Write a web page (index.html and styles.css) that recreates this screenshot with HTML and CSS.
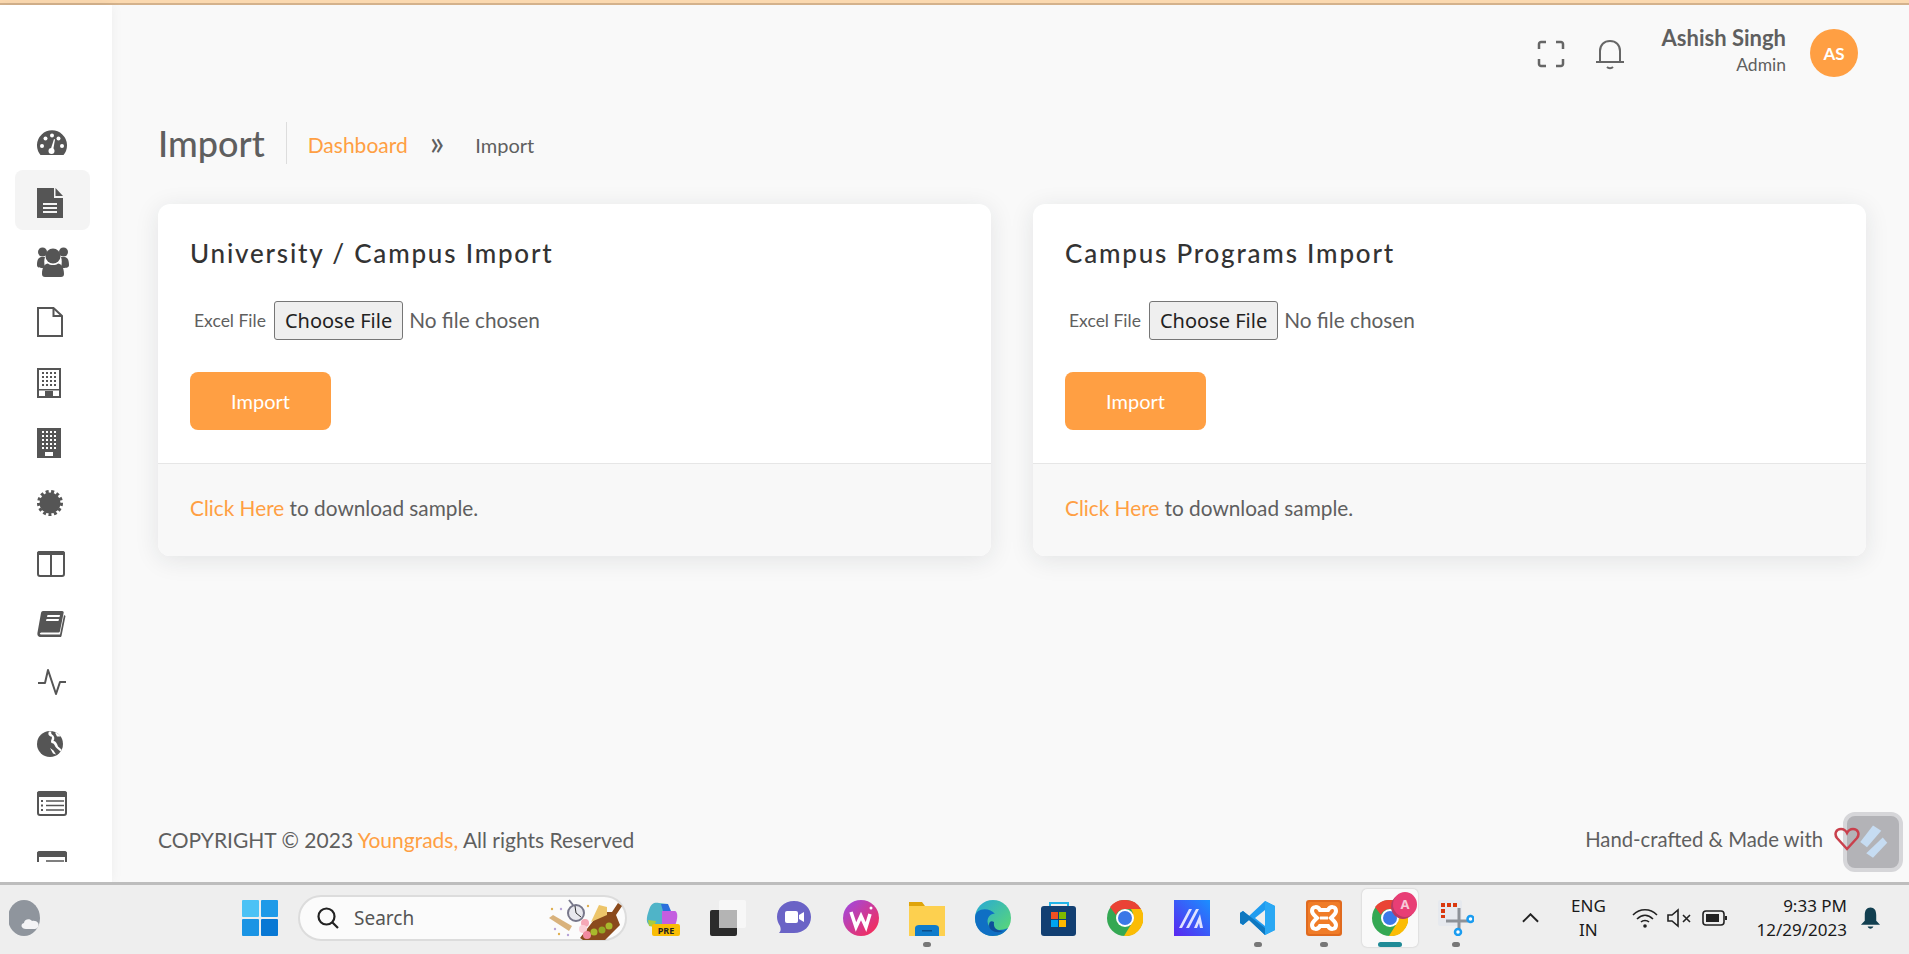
FILE: index.html
```html
<!DOCTYPE html>
<html lang="en">
<head>
    <meta charset="UTF-8">
    <meta name="viewport" content="width=device-width, initial-scale=1.0">
    <title>Import</title>
    <link rel="stylesheet" href="styles.css">
</head>
<body>
    <div class="top-strip"></div>

    <div class="app">
        <aside class="sidebar">
            <nav class="side-nav">
                <a class="side-item" href="#"><svg viewBox="0 0 32 32"><path class="fill" d="M3.500 29A15 15 0 1 1 26.500 29Z"/><g class="cut"><circle cx="5" cy="20" r="2"/><circle cx="8.500" cy="12.500" r="2"/><circle cx="15" cy="9.500" r="2"/><circle cx="25" cy="20" r="2"/><circle cx="21.500" cy="12.500" r="2"/><circle cx="14.500" cy="25" r="3"/><path d="M13.500 24 17 13 18 13.500 16 25Z"/></g></svg></a>
                <a class="side-item active" href="#"><svg viewBox="0 -1 32 32"><path class="fill" d="M0 1H17V11H26V31H0Z"/><path class="fill" d="M18.500 1 26 9H18.500Z"/><path class="cut" d="M6 16H20V18H6ZM6 20H20V22H6ZM6 24H20V26H6Z"/></svg></a>
                <a class="side-item" href="#"><svg viewBox="0 0 32 32"><circle class="fill" cx="5.500" cy="6" r="4.500"/><circle class="fill" cx="26.500" cy="6" r="4.500"/><path class="fill" d="M0 19C0 13 2 11 5 11H8C7 14 7 17 8 22 3 22 0 22 0 19ZM32 19C32 13 30 11 27 11H24C25 14 25 17 24 22 29 22 32 22 32 19Z"/><circle cx="16" cy="10" r="7.500" class="fill"/><path class="fill" d="M5 28C5 21 8 17.500 11 17.500 13 19.500 19 19.500 21 17.500 24 17.500 27 21 27 28 27 30 26 31 24 31H8C6 31 5 30 5 28Z"/></svg></a>
                <a class="side-item" href="#"><svg viewBox="0 0 32 32"><path class="line" d="M1 2H16.500L25 10V30H1Z"/><path class="line" d="M16.500 2V10H25"/></svg></a>
                <a class="side-item" href="#"><svg viewBox="0 -1 32 32"><path class="line" d="M1 2H23V30H1Z"/><path class="dots" d="M5 6H20M5 10H20M5 14H20M5 18H20"/><path class="fill" d="M8 24H16V30H8ZM1 22H23V23.500H1Z"/></svg></a>
                <a class="side-item" href="#"><svg viewBox="0 -1 32 32"><path class="fill" d="M0 1H24V31H0Z"/><path class="dots white" d="M5 5H20M5 9H20M5 13H20M5 17H20M5 21H20"/><path class="cut" d="M8 25H16V29H8Z"/></svg></a>
                <a class="side-item" href="#"><svg viewBox="0 -2 32 32"><circle class="fill" cx="13" cy="15" r="10.500"/><circle class="burst" cx="13" cy="15" r="11.500"/></svg></a>
                <a class="side-item" href="#"><svg viewBox="0 -2 32 32"><rect class="line" x="1" y="4" width="26" height="24" rx="2"/><path class="fill" d="M0 5C0 4 1 3 2 3H26C27 3 28 4 28 5V7H0Z"/><path class="fill" d="M13 6H15V28H13Z"/></svg></a>
                <a class="side-item" href="#"><svg viewBox="0 -2 32 32"><path class="fill" d="M6 3H25C26.500 3 27 4 26.500 5.500L23 23C22.800 24 22 24.500 21 24.500H5C3 24.500 2 26 4 26.500H23L27 7 28.500 8 24.500 28C24.300 29 23.500 29 23 29H4C1 29 0 27 .5 24.500L4 5C4.300 3.700 5 3 6 3Z"/><path class="cut" d="M10.500 7H23L22.500 9H10ZM9.500 11H22L21.500 13H9Z"/></svg></a>
                <a class="side-item" href="#"><svg viewBox="0 -2 32 32"><path class="pulse" d="M1 15H8L11 2 19 26 23 14H29"/></svg></a>
                <a class="side-item" href="#"><svg viewBox="0 -2 32 32"><circle class="fill" cx="13" cy="16" r="13"/><path class="cut" d="M12 3.500C10.500 6 12 8.500 14.500 8.500 16 10.500 13 12.500 14.500 15 17.500 15 17.500 18 19.500 20L23.500 23.500 24.500 21.500 21 18.500C20 15 18.500 13 16.500 13 18 11 17.500 8 15 6.500 14 5.500 14 4.500 14.500 3.500ZM18 4.500 20 8.500H23.500C22.500 6.500 20.500 5 18 4.500ZM13 20 16 25.500 19 26.500 16.500 22.500Z"/></svg></a>
                <a class="side-item" href="#"><svg viewBox="0 -2 32 32"><rect class="line" x="1" y="4" width="28" height="23" rx="2"/><path class="fill" d="M0 5C0 4 1 3 3 3H27C29 3 30 4 30 5V9H0Z"/><path class="list-lines" d="M9 13H27M9 17.500H27M9 22H27"/><path class="dots tight" d="M4 13H7M4 17.500H7M4 22H7"/></svg></a>
                <a class="side-item" href="#"><svg viewBox="0 -2 32 32"><rect class="line" x="1" y="4" width="28" height="23" rx="2"/><path class="fill" d="M0 5C0 4 1 3 3 3H27C29 3 30 4 30 5V9H0Z"/><path class="list-lines" d="M9 13H27M9 17.500H27M9 22H27"/></svg></a>
            </nav>
        </aside>

        <main class="main">
            <header class="topbar">
                <svg class="top-icon" viewBox="0 0 28 28"><path d="M2 9V4C2 3 3 2 4 2H9M19 2H24C25 2 26 3 26 4V9M26 19V24C26 25 25 26 24 26H19M9 26H4C3 26 2 25 2 24V19"/></svg>
                <svg class="top-icon bell" viewBox="0 0 32 32"><path d="M6 23V13C6 7 10 3 16 3S26 7 26 13V23M2 24H30M13 29C14.500 30.500 17.500 30.500 19 29"/></svg>
                <div class="user">
                    <div class="user-name">Ashish Singh</div>
                    <div class="user-role">Admin</div>
                </div>
                <div class="avatar">AS</div>
            </header>

            <div class="page-title">
                <h1>Import</h1>
                <a class="crumb-link" href="#">Dashboard</a>
                <span class="crumb-sep">»</span>
                <span class="crumb">Import</span>
            </div>

            <div class="cards">
                <section class="card">
                    <div class="card-body">
                        <h2>University / Campus Import</h2>
                        <div class="file-row">
                            <label>Excel File</label>
                            <input type="file">
                        </div>
                        <button class="import-btn" type="button">Import</button>
                    </div>
                    <div class="card-foot"><a href="#">Click Here</a> to download sample.</div>
                </section>
                <section class="card">
                    <div class="card-body">
                        <h2>Campus Programs Import</h2>
                        <div class="file-row">
                            <label>Excel File</label>
                            <input type="file">
                        </div>
                        <button class="import-btn" type="button">Import</button>
                    </div>
                    <div class="card-foot"><a href="#">Click Here</a> to download sample.</div>
                </section>
            </div>

            <footer class="page-foot">
                <div>COPYRIGHT © 2023 <a href="#">Youngrads,</a> All rights Reserved</div>
                <div class="made">Hand-crafted &amp; Made with
                    <svg class="heart" viewBox="0 0 26 26"><path d="M13 23 3 12C0 8 2 3 7 3 10 3 12 5 13 7 14 5 16 3 19 3 24 3 26 8 23 12Z"/></svg>
                </div>
            </footer>
        </main>
    </div>

    <div class="float-btn">
        <svg viewBox="0 0 48 52"><path d="M24 4 35 11 16 33 7 26Z"/><path d="M37 20 43 27 24 47 15 41Z"/></svg>
    </div>

    <div class="taskbar">
        <svg class="weather" viewBox="0 0 36 36"><ellipse cx="15" cy="18" rx="16" ry="18" fill="#8f959d"/><path d="M17 29C12 29 11 24 15 23 15 19 21 18 23 21 28 20 31 24 29 27 28 29 26 29 25 29Z" fill="#f4f4f6"/></svg>

        <svg class="win-logo" viewBox="0 0 36 36"><rect width="17" height="17" rx="1" fill="#4cc2f5"/><rect x="19" width="17" height="17" rx="1" fill="#1e9ae8"/><rect y="19" width="17" height="17" rx="1" fill="#1a94e4"/><rect x="19" y="19" width="17" height="17" rx="1" fill="#0878d4"/></svg>

        <div class="search">
            <svg class="search-icon" viewBox="0 0 24 24"><circle cx="10.500" cy="10.500" r="8"/><path d="M16 16 22 22"/></svg>
            <span>Search</span>
            <svg class="search-art" viewBox="0 0 76 44"><path d="M2 22 6 19 25 30 22 35Z" fill="#d9b27c"/><g fill="#b7a4d8"><circle cx="8" cy="33" r="1.200"/><circle cx="14" cy="13" r="1.200"/><circle cx="21" cy="39" r="1.200"/></g><g fill="#e0b050"><circle cx="5" cy="13" r="1.200"/><circle cx="12" cy="38" r="1.200"/><circle cx="41" cy="10" r="1.200"/></g><path d="M22 4 26 9" stroke="#77778a" stroke-width="2"/><circle cx="29" cy="17" r="8" fill="#e8e8ee" stroke="#77778a" stroke-width="2"/><path d="M28 10 29 17 34 21" stroke="#333" fill="none"/><path d="M33 42 53 16H65L71 7 75 10 69 19 73 29 58 44H36Z" fill="#8a4a1c"/><path d="M44 26 52 9 60 11 60 19Z" fill="#edc56a"/><circle cx="38" cy="27" r="4" fill="#f6a8b6"/><circle cx="36" cy="33" r="4" fill="#fbd0d8"/><circle cx="40" cy="39" r="4" fill="#f28aa0"/><circle cx="47" cy="36" r="3.500" fill="#a9b82c"/><circle cx="55" cy="34" r="3.500" fill="#94a824"/><circle cx="62" cy="30" r="3.500" fill="#a9b82c"/></svg>
        </div>

        <div class="apps">
            <div class="app-slot"><svg viewBox="0 0 36 36"><path d="M5 10C7 3 11 2 15 3L24 4 20 26 6 25C2 24 2 18 5 10Z" fill="#4fb4c8"/><path d="M4 20 12 21 10 27 5 26Z" fill="#a9cc3e"/><path d="M18 11H31C34 12 34 18 31 26L18 27Z" fill="#c45ee0"/><path d="M17 4 24 4 27 11H19Z" fill="#2a6fdc"/><rect x="8" y="24" width="28" height="12" rx="2" fill="#f9bd05"/><text class="pre" x="22" y="33.500">PRE</text></svg></div>
            <div class="app-slot"><svg viewBox="0 0 36 36"><rect x="9" y="0" width="27" height="28" rx="2" fill="#f7f7f7"/><rect y="10" width="27" height="26" rx="2" fill="#2b2b2b"/><rect x="9" y="10" width="18" height="18" fill="#b4b4b4"/></svg></div>
            <div class="app-slot"><svg viewBox="0 0 36 36"><path d="M18 1C28 1 35 8 35 17S28 33 18 33H3C5 31 5 29 4 26 2 23 1 20 1 17 1 8 8 1 18 1Z" fill="#6a63c6"/><rect x="9" y="11" width="13" height="12" rx="2" fill="#fff"/><path d="M23 15 28 12V22L23 19Z" fill="#fff"/></svg></div>
            <div class="app-slot"><svg viewBox="0 0 36 36"><defs><linearGradient id="wps" x1="0" y1="0" x2="1" y2="1"><stop offset="0" stop-color="#9a4be8"/><stop offset="1" stop-color="#ff2a4a"/></linearGradient></defs><circle cx="18" cy="18" r="18" fill="url(#wps)"/><path d="M8 12 13 27 18 16 23 27 27 14" fill="none" stroke="#fff" stroke-width="3.500"/><circle cx="28" cy="8" r="1.500" fill="#fff"/></svg></div>
            <div class="app-slot dot"><svg viewBox="0 0 36 36"><path d="M0 2H13L16 6H36V36H0Z" fill="#dfa40a"/><rect y="6" width="36" height="30" fill="#fdd04f"/><path d="M6 36V28C6 26 8 25 10 25H26C28 25 30 26 30 28V36Z" fill="#0f7ccb"/><rect x="13" y="30" width="10" height="1.500" fill="#0a4f8c"/></svg></div>
            <div class="app-slot"><svg viewBox="0 0 36 36"><defs><linearGradient id="edge" x1="0" y1="0" x2="1" y2="1"><stop offset="0" stop-color="#27a8d8"/><stop offset="1" stop-color="#5fdc6e"/></linearGradient></defs><circle cx="18" cy="18" r="18" fill="url(#edge)"/><path d="M0 18C0 29 8 36 18 36 24 36 30 33 33 28 27 31 16 31 13 24 11 18 16 13 20 14 15 7 0 7 0 18Z" fill="#0f6fc4"/><path d="M14 25C14 31 22 34 28 31 22 31 18 28 19 22 16 20 14 22 14 25Z" fill="#0d4f9a"/></svg></div>
            <div class="app-slot"><svg viewBox="0 0 36 36"><path d="M9 7V3H27V7" fill="none" stroke="#22b4e8" stroke-width="2"/><rect y="6" width="35" height="30" rx="3" fill="#123f72"/><rect x="10" y="12" width="7" height="7" fill="#f25022"/><rect x="18" y="12" width="7" height="7" fill="#7fba00"/><rect x="10" y="20" width="7" height="7" fill="#00a4ef"/><rect x="18" y="20" width="7" height="7" fill="#ffb900"/></svg></div>
            <div class="app-slot"><svg viewBox="0 0 36 36"><circle cx="18" cy="18" r="18" fill="#34a853"/><path d="M18 0A18 18 0 0 1 34 9H18C13 9 10 12 9 15L3 7A18 18 0 0 1 18 0Z" fill="#ea4335"/><path d="M34 9A18 18 0 0 1 17 36L25 23C27 20 27 14 24 9Z" fill="#fbbc05"/><circle cx="18" cy="18" r="9" fill="#fff"/><circle cx="18" cy="18" r="7" fill="#3b78e7"/></svg></div>
            <div class="app-slot"><svg viewBox="0 0 36 36"><defs><linearGradient id="ma" x1="0" y1="1" x2="1" y2="0"><stop offset="0" stop-color="#5a26f0"/><stop offset="1" stop-color="#1a90ff"/></linearGradient></defs><rect width="36" height="36" fill="url(#ma)"/><path d="M5 28 15 9H18L8 28ZM12 28 22 9H25L15 28ZM20 28 26 14 29 28H26L25 23 23 28Z" fill="#dfe2ff"/></svg></div>
            <div class="app-slot dot"><svg viewBox="0 0 36 36"><path d="M25 1 35 6V30L25 35 9 20 3 25 0 23V13L3 11 9 16ZM25 10 15 18 25 26Z" fill="#1f9cf0"/><path d="M25 1 35 6V30L25 35Z" fill="#2aa8f4"/><path d="M0 13 3 11 25 28V35L9 20 3 25 0 23Z" fill="#0f78c0"/></svg></div>
            <div class="app-slot dot"><svg viewBox="0 0 36 36"><rect width="36" height="36" rx="3" fill="#e06a1e"/><rect x="2" y="2" width="32" height="32" rx="2" fill="#f07c28"/><path d="M14 10C12 6 6 6 6 11 6 14 9 16 11 18 9 20 6 22 6 25 6 30 12 30 14 26H22C24 30 30 30 30 25 30 22 27 20 25 18 27 16 30 14 30 11 30 6 24 6 22 10Z" fill="none" stroke="#fff" stroke-width="4"/><path d="M14 18H22" stroke="#fff" stroke-width="3"/></svg></div>
            <div class="app-slot chrome-active"><svg viewBox="0 0 36 36"><circle cx="18" cy="18" r="18" fill="#34a853"/><path d="M18 0A18 18 0 0 1 34 9H18C13 9 10 12 9 15L3 7A18 18 0 0 1 18 0Z" fill="#ea4335"/><path d="M34 9A18 18 0 0 1 17 36L25 23C27 20 27 14 24 9Z" fill="#fbbc05"/><circle cx="18" cy="18" r="9" fill="#fff"/><circle cx="18" cy="18" r="7" fill="#3b78e7"/></svg><span class="profile">A</span></div>
            <div class="app-slot dot"><svg viewBox="0 0 36 36"><rect width="24" height="26" rx="2" fill="#e6e9ee"/><path d="M3 3H7V7H3ZM9 3H13V7H9ZM15 3H19V7H15ZM3 9H7V13H3ZM3 15H7V18H3Z" fill="#d9380f"/><path d="M21 8V29M8 21H30" stroke="#8d9298" stroke-width="3"/><circle cx="20" cy="32" r="3" fill="#fff" stroke="#1a9cf0" stroke-width="2.500"/><circle cx="32.500" cy="19" r="3" fill="#fff" stroke="#1a9cf0" stroke-width="2.500"/></svg></div>
        </div>

        <div class="tray">
            <svg class="chevron" viewBox="0 0 18 10"><path d="M1 9 9 1 17 9"/></svg>
            <div class="lang">ENG<br>IN</div>
            <svg class="tray-icon wifi" viewBox="0 0 26 20"><path d="M1 7C8 0 18 0 25 7M5 11C10 6 16 6 21 11M9 14C11 12 15 12 17 14"/><circle cx="13" cy="18" r="1.800"/></svg>
            <svg class="tray-icon" viewBox="0 0 26 20"><path d="M1 7H5L11 2V18L5 13H1Z"/><path d="M16 7 23 14M23 7 16 14"/></svg>
            <svg class="tray-icon" viewBox="0 0 26 20"><rect x="1" y="3" width="21" height="14" rx="3"/><rect class="solid" x="4" y="6" width="13" height="8"/><rect class="solid" x="23" y="8" width="2" height="4"/></svg>
            <div class="clock">9:33 PM<br>12/29/2023</div>
            <svg class="tray-bell" viewBox="0 0 22 24"><path d="M11 1C15 1 17 4 17 9V15L21 19H1L5 15V9C5 4 7 1 11 1ZM8 21H14C13 24 9 24 8 21Z"/></svg>
        </div>
    </div>
</body>
</html>
```

FILE: styles.css
```css
* {
    box-sizing: border-box;
}
html, body {
    height: 100%;
}
body {
    margin: 0;
    display: flex;
    flex-direction: column;
    height: 954px;
    overflow: hidden;
    background: #f9f9f9;
    color: #5f5f5f;
    font-family: Lato, "Noto Sans", sans-serif;
}
a {
    color: #ff9f43;
    text-decoration: none;
}
.top-strip {
    height: 5px;
    background: #fbd9b0;
    border-bottom: 2px solid #d4b28c;
}
.app {
    flex: 1;
    display: flex;
    min-height: 0;
}

/* sidebar */
.sidebar {
    width: 112px;
    padding-top: 105px;
    background: #fff;
    box-shadow: 0 0 12px rgba(0, 0, 0, .05);
}
.side-nav {
    height: 752px;
    overflow: hidden;
}
.side-item {
    display: flex;
    align-items: center;
    width: 75px;
    height: 60px;
    margin-left: 15px;
    padding: 4px 0 0 22px;
    border-radius: 8px;
}
.side-item.active {
    background: #f4f4f4;
}
.side-item svg {
    width: 32px;
    height: 32px;
    flex: none;
}
.fill {
    fill: #555;
}
.cut {
    fill: #fff;
}
.active .cut {
    fill: #f4f4f4;
}
.line {
    fill: none;
    stroke: #555;
    stroke-width: 2;
}
.dots {
    fill: none;
    stroke: #555;
    stroke-width: 2;
    stroke-dasharray: 2 2;
}
.dots.white {
    stroke: #fff;
}
.dots.tight {
    stroke-dasharray: 2 1;
}
.burst {
    fill: none;
    stroke: #555;
    stroke-width: 3;
    stroke-dasharray: 3 2.500;
}
.pulse {
    fill: none;
    stroke: #555;
    stroke-width: 2;
    stroke-linejoin: round;
}
.list-lines {
    fill: none;
    stroke: #555;
    stroke-width: 1.500;
}

/* main */
.main {
    flex: 1;
    display: flex;
    flex-direction: column;
    padding: 0 43px 0 46px;
    min-width: 0;
}
.topbar {
    display: flex;
    align-items: center;
    justify-content: flex-end;
    height: 96px;
    padding: 0 8px 0 0;
}
.top-icon {
    width: 28px;
    height: 28px;
    margin-top: 2px;
    fill: none;
    stroke: #666;
    stroke-width: 2.500;
}
.top-icon.bell {
    width: 32px;
    height: 32px;
    stroke-width: 2;
    margin: 2px 0 0 29px;
}
.user {
    margin: -7px 24px 0 36px;
    text-align: right;
}
.user-name {
    font-size: 22px;
    font-weight: 700;
    line-height: 26px;
}
.user-role {
    font-size: 17.500px;
    line-height: 20px;
    margin-top: 4px;
}
.avatar {
    width: 48px;
    height: 48px;
    border-radius: 50%;
    background: #ff9f43;
    color: #fff;
    font-size: 17px;
    font-weight: 700;
    display: flex;
    align-items: center;
    justify-content: center;
}
.page-title {
    display: flex;
    align-items: center;
    height: 42px;
    margin-top: 21px;
    font-size: 20px;
}
.page-title h1 {
    margin: 0 21px 0 0;
    padding-right: 21px;
    border-right: 1px solid #ddd;
    font-size: 36px;
    font-weight: 500;
    line-height: 42px;
}
.crumb-link {
    padding-top: 3px;
    font-size: 21px;
}
.crumb {
    padding-top: 4px;
}
.crumb-sep {
    margin: -3px 31px 0 22px;
    font-size: 34px;
    font-weight: 400;
}

/* cards */
.cards {
    display: grid;
    grid-template-columns: 1fr 1fr;
    gap: 42px;
    margin-top: 40px;
}
.card {
    background: #fff;
    border-radius: 12px;
    box-shadow: 0 4px 24px rgba(34, 41, 47, .1);
    overflow: hidden;
}
.card-body {
    height: 259px;
    padding: 30px 32px 0;
}
.card h2 {
    margin: 0;
    color: #333;
    font-size: 26px;
    font-weight: 500;
    line-height: 38px;
    letter-spacing: 1.800px;
}
.file-row {
    display: flex;
    align-items: center;
    margin-top: 29px;
    padding-left: 4px;
    font-size: 17.500px;
}
.file-row label {
    margin-right: 8px;
}
.file-row input {
    color: #5f5f5f;
    font-family: Lato, sans-serif;
    font-size: 20.800px;
}
.file-row input::file-selector-button {
    height: 39px;
    margin-right: 6px;
    padding: 0 10px;
    background: #efefef;
    border: 1px solid #767676;
    border-radius: 3px;
    color: #222;
    font-family: "Noto Sans", sans-serif;
    font-size: 20px;
}
.import-btn {
    display: block;
    width: 141px;
    height: 58px;
    margin-top: 32px;
    background: #ff9f43;
    border: none;
    border-radius: 8px;
    color: #fff;
    font-family: Lato, sans-serif;
    font-size: 20px;
}
.card-foot {
    height: 93px;
    padding: 31px 32px 0;
    background: #f8f8f8;
    border-top: 1px solid #e6e6e6;
    font-size: 20.800px;
    line-height: 26px;
}
.page-foot {
    display: flex;
    justify-content: space-between;
    align-items: center;
    margin-top: auto;
    height: 70px;
    margin-bottom: 8px;
    font-size: 21px;
}
.made {
    display: flex;
    align-items: center;
    gap: 11px;
    padding-right: 6px;
    font-size: 20.300px;
}
.heart {
    position: relative;
    z-index: 1;
    width: 26px;
    height: 26px;
    fill: none;
    stroke: #c9404c;
    stroke-width: 2.500;
}

/* floating button */
.float-btn {
    position: absolute;
    left: 1843px;
    top: 812px;
    width: 60px;
    height: 60px;
    padding: 4px 8px;
    background: rgba(150, 150, 155, .7);
    border: 4px solid #d6d6d9;
    border-radius: 12px;
}
.float-btn svg {
    width: 100%;
    height: 100%;
    fill: #c6dcf2;
}

/* taskbar */
.taskbar {
    display: flex;
    align-items: center;
    height: 72px;
    padding: 0 0 3px 9px;
    background: #eee;
    border-top: 3px solid #bdbdbd;
}
.weather {
    width: 36px;
    height: 36px;
    flex: none;
}
.win-logo {
    width: 36px;
    height: 36px;
    flex: none;
    margin-left: 197px;
}
.search {
    flex: none;
    display: flex;
    align-items: center;
    width: 329px;
    height: 46px;
    margin-left: 20px;
    padding-left: 16px;
    background: #fbfbfb;
    border: 2px solid #dcdcdc;
    border-radius: 23px;
    color: #555;
    font-family: "Noto Sans", sans-serif;
    font-size: 19px;
}
.search-icon {
    width: 24px;
    height: 24px;
    margin-right: 14px;
    fill: none;
    stroke: #222;
    stroke-width: 2.200;
}
.search-art {
    width: 76px;
    height: 44px;
    margin-left: auto;
    margin-right: 2px;
}
.apps {
    flex: none;
    display: flex;
    margin-left: 2px;
}
.app-slot {
    position: relative;
    display: flex;
    align-items: center;
    justify-content: center;
    width: 66.200px;
    height: 58px;
}
.app-slot svg {
    width: 36px;
    height: 36px;
}
.pre {
    fill: #222;
    font-family: "Noto Sans", sans-serif;
    font-size: 9px;
    font-weight: 700;
    text-anchor: middle;
}
.dot::after {
    content: "";
    position: absolute;
    left: 29px;
    bottom: 0;
    width: 8px;
    height: 5px;
    background: #777;
    border-radius: 3px;
}
.chrome-active::before {
    content: "";
    position: absolute;
    left: 5px;
    right: 5px;
    top: 0;
    bottom: 0;
    background: #f9f9f9;
    border-radius: 5px;
    box-shadow: 0 0 2px rgba(0, 0, 0, .2);
}
.chrome-active::after {
    content: "";
    position: absolute;
    left: 21px;
    bottom: 0;
    width: 24px;
    height: 5px;
    background: #1f8a96;
    border-radius: 3px;
}
.chrome-active svg {
    position: relative;
}
.profile {
    position: absolute;
    left: 36px;
    top: 3px;
    width: 24px;
    height: 25px;
    background: #e83e75;
    border-radius: 50%;
    box-shadow: -2px 2px 0 #b83a63;
    color: #f8c8d8;
    font-family: "Noto Sans", sans-serif;
    font-size: 13px;
    font-weight: 700;
    line-height: 25px;
    text-align: center;
}
.tray {
    flex: 1;
    display: flex;
    align-items: center;
    min-width: 0;
    color: #1a1a1a;
    font-family: "Noto Sans", sans-serif;
    font-size: 17px;
}
.chevron {
    flex: none;
    width: 17px;
    height: 10px;
    margin-left: 33px;
    fill: none;
    stroke: #222;
    stroke-width: 2;
}
.lang {
    width: 50px;
    margin-left: 24px;
    line-height: 24px;
    text-align: center;
}
.tray-icon {
    flex: none;
    width: 26px;
    height: 20px;
    margin-left: 9px;
    fill: none;
    stroke: #222;
    stroke-width: 1.600;
}
.tray-icon.wifi {
    margin-left: 19px;
}
.tray-icon.wifi circle, .tray-icon .solid {
    fill: #222;
    stroke: none;
}
.clock {
    flex: 1;
    line-height: 24px;
    text-align: right;
    white-space: nowrap;
}
.tray-bell {
    flex: none;
    width: 21px;
    height: 24px;
    margin: 0 28px 0 13px;
    fill: #123f50;
}
```
